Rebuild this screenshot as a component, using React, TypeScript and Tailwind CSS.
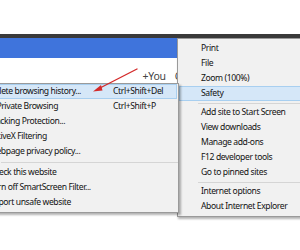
import React from 'react';

const font = { fontFamily: '"Noto Sans", "Open Sans", sans-serif' };

type Item = { label: string; shortcut?: string; active?: boolean } | 'sep';

const safetyItems: Item[] = [
  { label: 'Delete browsing history...', shortcut: 'Ctrl+Shift+Del', active: true },
  { label: 'InPrivate Browsing', shortcut: 'Ctrl+Shift+P' },
  { label: 'Tracking Protection...' },
  { label: 'ActiveX Filtering' },
  { label: 'Webpage privacy policy...' },
  'sep',
  { label: 'Check this website' },
  { label: 'Turn off SmartScreen Filter...' },
  { label: 'Report unsafe website' },
];

const toolsItems: Item[] = [
  { label: 'Print' },
  { label: 'File' },
  { label: 'Zoom (100%)' },
  { label: 'Safety', active: true },
  'sep',
  { label: 'Add site to Start Screen' },
  { label: 'View downloads' },
  { label: 'Manage add-ons' },
  { label: 'F12 developer tools' },
  { label: 'Go to pinned sites' },
  'sep',
  { label: 'Internet options' },
  { label: 'About Internet Explorer' },
];

function Row({ item, textPad, sepH, shortcutCol }: { item: Item; textPad: string; sepH: string; shortcutCol?: boolean }) {
  if (item === 'sep') {
    return (
      <div className={`flex ${sepH} items-center pl-[20px]`}>
        <div className="h-px w-full bg-[#d5d5d5]" />
      </div>
    );
  }
  return (
    <div
      className={`mx-px flex h-[15px] items-center border text-[8.6px] leading-none tracking-[-0.4px] text-[#111] ${
        item.active ? 'border-[#a8cff0] bg-[#d5e7f8]' : 'border-transparent'
      }`}
    >
      <span className={`${textPad} whitespace-nowrap`}>{item.label}</span>
      {shortcutCol && (
        <span className="ml-auto w-[63px] whitespace-nowrap">{item.shortcut ?? ''}</span>
      )}
    </div>
  );
}

export default function App() {
  return (
    <div className="relative h-[250px] w-[300px] overflow-hidden bg-white" style={font}>
      <div className="h-[34px]" />
      <div className="h-[4px] bg-[#3a3a3a]" />
      <div className="h-[20px] bg-[#3f74dc]" />
      <div className="flex h-[30px] items-end justify-end pb-[3px] pr-[118px] text-[10.5px] tracking-[-0.3px] text-[#444]">
        <span>+You</span>
        <span className="ml-[9px]">G</span>
      </div>

      {/* Tools menu */}
      <div className="absolute left-[177px] top-[38px] w-[140px] border border-[#9a9a9a] bg-[#f1f1f1] py-[2px] shadow-[1px_2px_2px_rgba(0,0,0,0.3)]">
        {toolsItems.map((it, i) => (
          <Row key={i} item={it} textPad="pl-[21px]" sepH="h-[4px]" />
        ))}
      </div>

      {/* Safety submenu */}
      <div className="absolute left-[-20px] top-[83px] w-[199px] border border-[#9a9a9a] bg-[#f1f1f1] pb-[2px] shadow-[2px_2px_2px_rgba(0,0,0,0.3)]">
        {safetyItems.map((it, i) => (
          <Row key={i} item={it} textPad="pl-[6px]" sepH="h-[6px]" shortcutCol />
        ))}
      </div>

      {/* red arrow */}
      <svg className="pointer-events-none absolute left-0 top-0" width="300" height="250" viewBox="0 0 300 250">
        <line x1="137" y1="69" x2="98" y2="89" stroke="#d42a2a" strokeWidth="1.4" strokeLinecap="round" />
        <path d="M93 91.5 L101 85 L102.5 90.5 Z" fill="#d42a2a" />
      </svg>
    </div>
  );
}
